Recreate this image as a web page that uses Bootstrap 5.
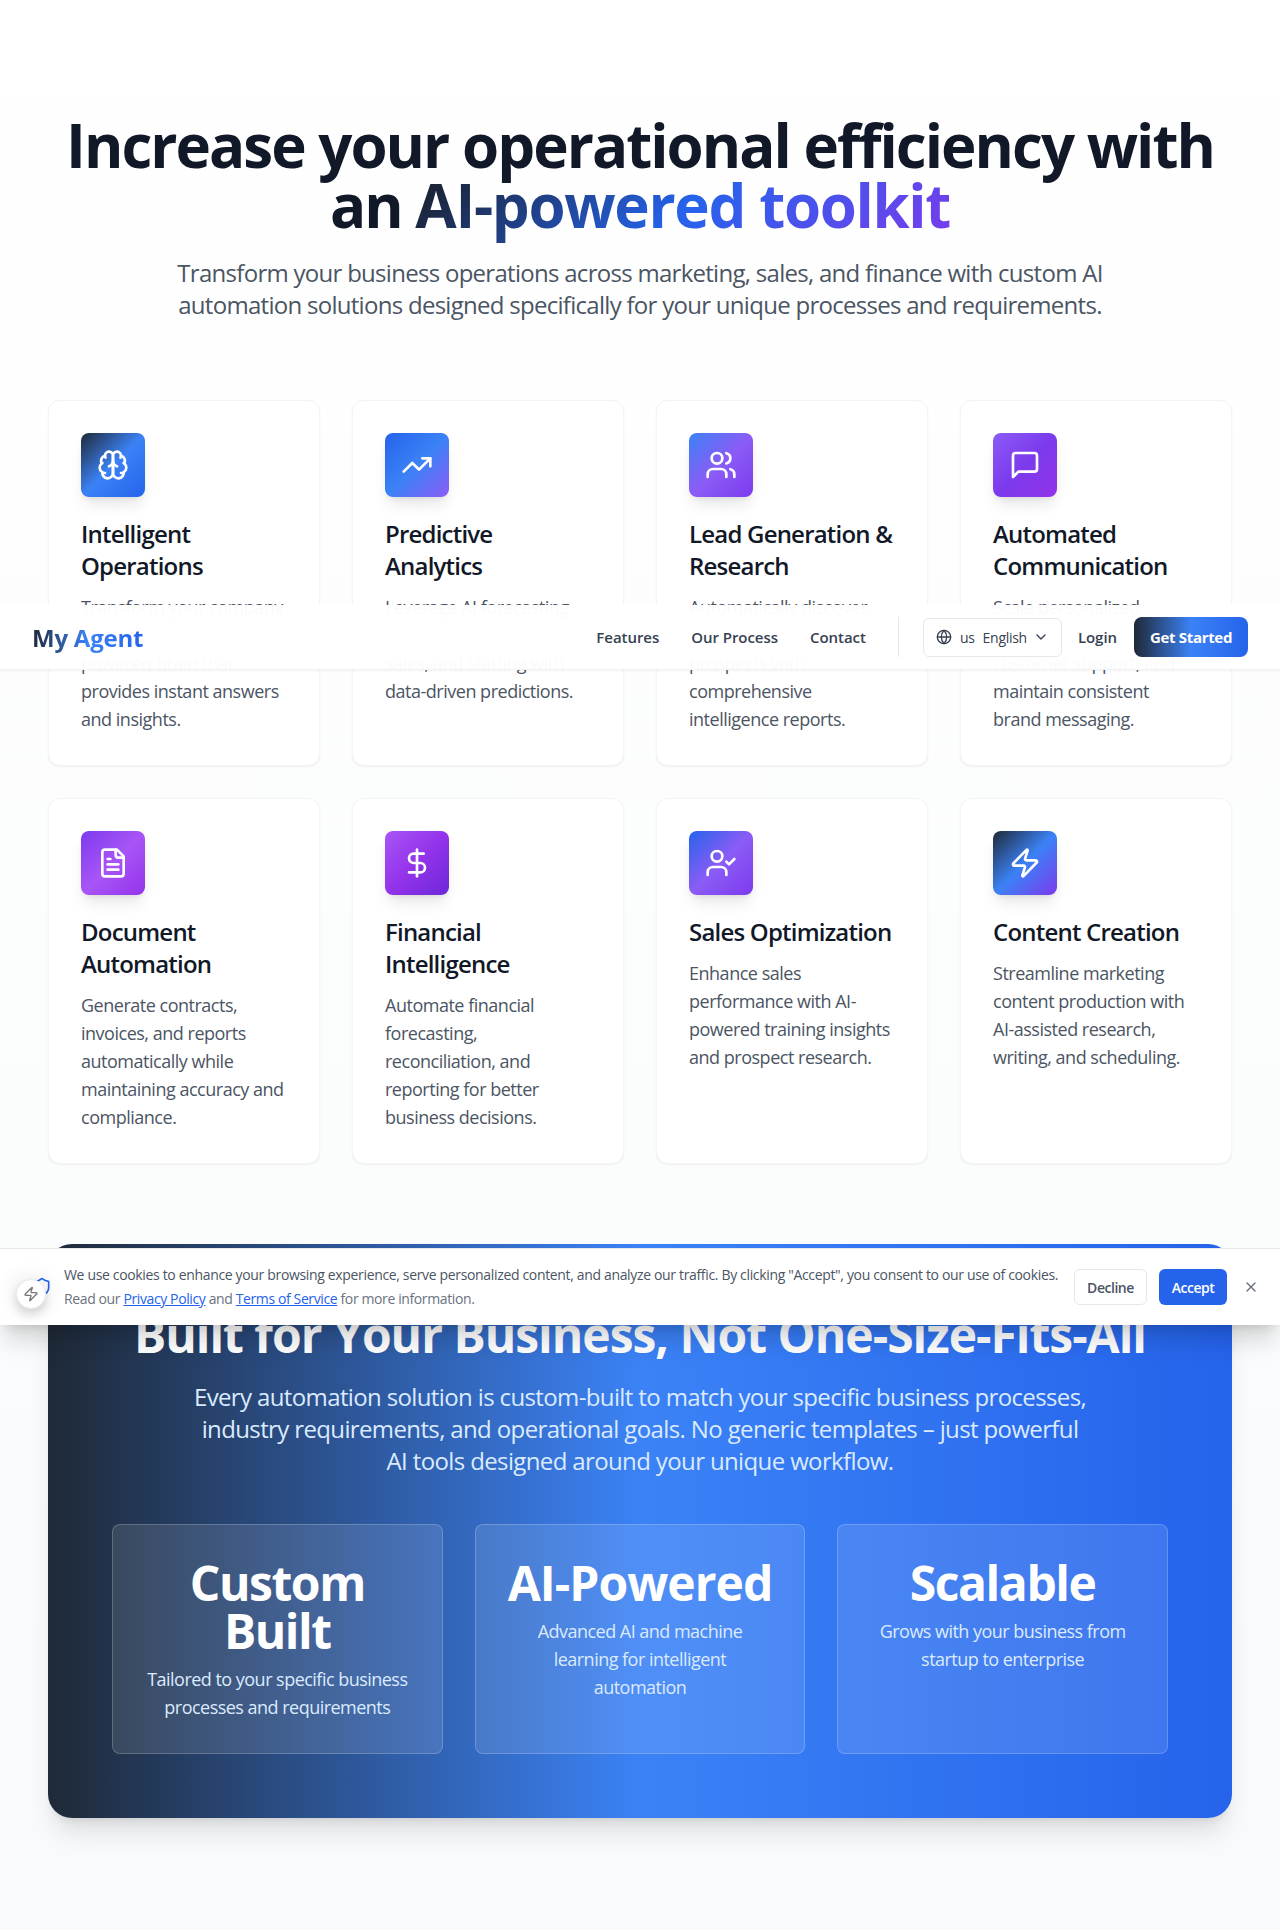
<!DOCTYPE html>
<html lang="en">
<head>
<meta charset="utf-8">
<meta name="viewport" content="width=device-width, initial-scale=1">
<title>My Agent</title>
<link href="https://cdn.jsdelivr.net/npm/bootstrap@5.3.0/dist/css/bootstrap.min.css" rel="stylesheet">
<style>
  body { font-family: "Open Sans", "Noto Sans", sans-serif; color: #111827; background: #fff; }
  svg.ico { fill: none; stroke: currentColor; stroke-width: 2; stroke-linecap: round; stroke-linejoin: round; flex: none; display: block; }

  .features { background: linear-gradient(to bottom, #fff, #fbfcfc 60%, #f9fafc 86%, #f9fafc); padding: 112px 48px; min-height: 1930px; }
  .hero-title { font-size: 60px; line-height: 60px; font-weight: 700; letter-spacing: -.0328em; padding-top: 3px; margin: 0 -20px 22px; }
  .hero-title .fade-word { letter-spacing: -.0225em; background: linear-gradient(135deg, #1a1a1a, #2563eb 50%, #7c3aed); -webkit-background-clip: text; background-clip: text; color: transparent; padding-bottom: 8px; }
  .hero-sub { font-size: 24px; line-height: 32px; letter-spacing: -.0298em; color: #4b5563; margin-bottom: 79px; }

  .feature-grid { --bs-gutter-x: 32px; --bs-gutter-y: 32px; margin-bottom: 80px; }
  .feature-card { background: #fff; border: 1px solid #f3f4f6; border-radius: 12px; box-shadow: 0 1px 2px rgba(0,0,0,.06); padding: 32px; height: 366px; }
  .tile { width: 64px; height: 64px; border-radius: 8px; color: #fff; box-shadow: 0 10px 15px -3px rgba(0,0,0,.1), 0 4px 6px -4px rgba(0,0,0,.1); margin-bottom: 20px; }
  .feature-card h3 { font-size: 24px; line-height: 32px; font-weight: 600; letter-spacing: -.033em; padding-top: 1px; margin-bottom: 11px; white-space: nowrap; }
  .feature-card p { font-size: 18px; line-height: 28px; letter-spacing: -.027em; color: #4b5563; margin: 0 -4px 0 0; }
  .g1 { background: linear-gradient(135deg, #1f2937, #3b82f6, #2563eb); }
  .g2 { background: linear-gradient(135deg, #2563eb, #3b82f6, #8b5cf6); }
  .g3 { background: linear-gradient(135deg, #3b82f6, #8b5cf6, #7c3aed); }
  .g4 { background: linear-gradient(135deg, #8b5cf6, #7c3aed, #9333ea); }
  .g5 { background: linear-gradient(135deg, #7c3aed, #a855f7, #9333ea); }
  .g6 { background: linear-gradient(135deg, #a855f7, #9333ea, #6d28d9); }
  .g7 { background: linear-gradient(135deg, #2563eb, #8b5cf6, #7c3aed); }
  .g8 { background: linear-gradient(135deg, #1f2937, #3b82f6, #7c3aed); }

  .banner { background: linear-gradient(to right, #1f2937, #3b82f6, #2563eb); border-radius: 24px; padding: 64px; height: 574px; color: #fff; box-shadow: 0 20px 25px -5px rgba(0,0,0,.1), 0 8px 10px -6px rgba(0,0,0,.1); }
  .banner h2 { font-size: 48px; line-height: 48px; font-weight: 700; letter-spacing: -.0208em; padding-top: 3px; margin-bottom: 22px; }
  .banner-sub { font-size: 24px; line-height: 32px; letter-spacing: -.0262em; color: #dbeafe; margin-bottom: 47px; }
  .perk { --bs-gutter-x: 32px; }
  .perk-box { background: rgba(255,255,255,.11); border: 1px solid rgba(255,255,255,.2); border-radius: 8px; padding: 32px 24px; height: 230px; }
  .perk-box strong { display: block; font-size: 48px; line-height: 48px; font-weight: 700; letter-spacing: -.03em; padding-top: 2px; margin-bottom: 10px; }
  .perk-box strong.wide { letter-spacing: -.02em; }
  .perk-box p { font-size: 18px; line-height: 28px; letter-spacing: -.029em; color: #dbeafe; margin: 0; }

  .topbar { top: 605px; height: 65px; z-index: 20; padding: 0 32px; border-bottom: 1px solid #f1f2f4; box-shadow: 0 1px 2px rgba(0,0,0,.05);
    background: linear-gradient(to bottom, rgba(255,255,255,.965), #fff 32%, #fff 68%, rgba(255,255,255,.965)); }
  .logo { font-size: 24px; line-height: 32px; font-weight: 700; letter-spacing: -.009em; padding-top: 2px; background: linear-gradient(to right, #1f2937, #3b82f6 50%, #2563eb); -webkit-background-clip: text; background-clip: text; color: transparent; }
  .topbar a.item { font-size: 15px; font-weight: 600; letter-spacing: -.003em; color: #374151; text-decoration: none; }
  .rule { width: 1px; height: 40px; background: #e5e7eb; margin: 0 24px 0 32px; }
  .lang { width: 139px; height: 39px; border: 1px solid #e5e7eb; border-radius: 6px; font-size: 14px; letter-spacing: -.02em; color: #374151; padding: 0 12px; background: #fff; }
  .cta { width: 114px; height: 40px; border-radius: 8px; font-size: 15px; font-weight: 700; letter-spacing: -.021em; color: #fff; background: linear-gradient(to right, #1f2937, #3b82f6, #2563eb); padding: 0; border: 0; white-space: nowrap; }

  .cookies { top: 1248px; height: 77px; z-index: 30; background: #fff; border-top: 1px solid #e5e7eb; padding: 0 21px 0 32px; box-shadow: 0 20px 25px -5px rgba(0,0,0,.15), 0 8px 10px -6px rgba(0,0,0,.12); }
  .cookies .note { font-size: 14px; line-height: 24px; letter-spacing: -.0243em; color: #4b5563; white-space: nowrap; width: 994px; }
  .cookies .note .more { letter-spacing: -.0275em; color: #6b7280; }
  .cookies .note a { color: #2563eb; }
  .cookies .btn { font-size: 14px; font-weight: 600; letter-spacing: -.033em; height: 36px; border-radius: 6px; padding: 0; }
  .decline { width: 73px; border: 1px solid #e5e7eb; color: #4b5563; background: #fff; }
  .accept { width: 68px; background: #2563eb; color: #fff; }
  .bolt { left: 16px; top: 1279px; width: 30px; height: 30px; z-index: 40; background: #fff; border: 1px solid #e9eaec; color: #777; box-shadow: 0 0 22px rgba(0,0,0,.13), 0 6px 10px rgba(0,0,0,.12); }
</style>
<script src="https://cdn.jsdelivr.net/npm/bootstrap@5.3.0/dist/js/bootstrap.bundle.min.js"></script>
</head>
<body class="position-relative">

<nav class="topbar position-absolute start-0 w-100 d-flex align-items-center justify-content-between">
  <span class="logo">My Agent</span>
  <div class="d-flex align-items-center">
    <div class="d-flex" style="gap:32px">
      <a class="item" href="#">Features</a>
      <a class="item" href="#">Our Process</a>
      <a class="item" href="#">Contact</a>
    </div>
    <span class="rule"></span>
    <div class="lang d-flex align-items-center">
      <svg class="ico me-2" width="16" height="16" viewBox="0 0 24 24"><circle cx="12" cy="12" r="10"/><path d="M12 2a14.5 14.5 0 0 0 0 20 14.5 14.5 0 0 0 0-20"/><path d="M2 12h20"/></svg>
      <span class="me-2">us</span><span>English</span>
      <svg class="ico ms-auto" width="16" height="16" viewBox="0 0 24 24"><path d="m6 9 6 6 6-6"/></svg>
    </div>
    <a class="item" style="margin:0 17px 0 16px" href="#">Login</a>
    <a class="btn cta d-flex align-items-center justify-content-center" href="#">Get Started</a>
  </div>
</nav>

<section class="features">
  <div class="text-center">
    <h1 class="hero-title">Increase your operational efficiency with<br>an <span class="fade-word">AI-powered toolkit</span></h1>
    <p class="hero-sub">Transform your business operations across marketing, sales, and finance with custom AI<br>automation solutions designed specifically for your unique processes and requirements.</p>
  </div>

  <div class="row row-cols-4 feature-grid mt-0">
    <div class="col mt-0">
      <div class="feature-card">
        <div class="tile g1 d-flex align-items-center justify-content-center"><svg class="ico" width="32" height="32" viewBox="0 0 24 24"><path d="M12 5a3 3 0 1 0-5.997.125 4 4 0 0 0-2.526 5.77 4 4 0 0 0 .556 6.588A4 4 0 1 0 12 18Z"/><path d="M12 5a3 3 0 1 1 5.997.125 4 4 0 0 1 2.526 5.77 4 4 0 0 1-.556 6.588A4 4 0 1 1 12 18Z"/><path d="M15 13a4.5 4.5 0 0 1-3-4 4.5 4.5 0 0 1-3 4"/><path d="M17.599 6.5a3 3 0 0 0 .399-1.375"/><path d="M6.003 5.125A3 3 0 0 0 6.401 6.5"/><path d="M3.477 10.896a4 4 0 0 1 .585-.396"/><path d="M19.938 10.5a4 4 0 0 1 .585.396"/><path d="M6 18a4 4 0 0 1-1.967-.516"/><path d="M19.967 17.484A4 4 0 0 1 18 18"/></svg></div>
        <h3>Intelligent<br>Operations</h3>
        <p>Transform your company<br>knowledge into an AI-<br>powered brain that<br>provides instant answers<br>and insights.</p>
      </div>
    </div>
    <div class="col mt-0">
      <div class="feature-card">
        <div class="tile g2 d-flex align-items-center justify-content-center"><svg class="ico" width="32" height="32" viewBox="0 0 24 24"><path d="M16 7h6v6"/><path d="m22 7-8.500 8.500-5-5L2 17"/></svg></div>
        <h3>Predictive<br>Analytics</h3>
        <p>Leverage AI forecasting<br>to optimize inventory,<br>sales, and staffing with<br>data-driven predictions.</p>
      </div>
    </div>
    <div class="col mt-0">
      <div class="feature-card">
        <div class="tile g3 d-flex align-items-center justify-content-center"><svg class="ico" width="32" height="32" viewBox="0 0 24 24"><path d="M16 21v-2a4 4 0 0 0-4-4H6a4 4 0 0 0-4 4v2"/><circle cx="9" cy="7" r="4"/><path d="M22 21v-2a4 4 0 0 0-3-3.870"/><path d="M16 3.130a4 4 0 0 1 0 7.750"/></svg></div>
        <h3>Lead Generation &amp;<br>Research</h3>
        <p>Automatically discover,<br>qualify, and research<br>prospects with<br>comprehensive<br>intelligence reports.</p>
      </div>
    </div>
    <div class="col mt-0">
      <div class="feature-card">
        <div class="tile g4 d-flex align-items-center justify-content-center"><svg class="ico" width="32" height="32" viewBox="0 0 24 24"><path d="M21 15a2 2 0 0 1-2 2H7l-4 4V5a2 2 0 0 1 2-2h14a2 2 0 0 1 2 2z"/></svg></div>
        <h3>Automated<br>Communication</h3>
        <p>Scale personalized<br>outreach, automate<br>customer support, and<br>maintain consistent<br>brand messaging.</p>
      </div>
    </div>
    <div class="col">
      <div class="feature-card">
        <div class="tile g5 d-flex align-items-center justify-content-center"><svg class="ico" width="32" height="32" viewBox="0 0 24 24"><path d="M15 2H6a2 2 0 0 0-2 2v16a2 2 0 0 0 2 2h12a2 2 0 0 0 2-2V7Z"/><path d="M14 2v4a2 2 0 0 0 2 2h4"/><path d="M10 9H8"/><path d="M16 13H8"/><path d="M16 17H8"/></svg></div>
        <h3>Document<br>Automation</h3>
        <p>Generate contracts,<br>invoices, and reports<br>automatically while<br>maintaining accuracy and<br>compliance.</p>
      </div>
    </div>
    <div class="col">
      <div class="feature-card">
        <div class="tile g6 d-flex align-items-center justify-content-center"><svg class="ico" width="32" height="32" viewBox="0 0 24 24"><path d="M12 2v20"/><path d="M17 5H9.500a3.500 3.500 0 0 0 0 7h5a3.500 3.500 0 0 1 0 7H6"/></svg></div>
        <h3>Financial<br>Intelligence</h3>
        <p>Automate financial<br>forecasting,<br>reconciliation, and<br>reporting for better<br>business decisions.</p>
      </div>
    </div>
    <div class="col">
      <div class="feature-card">
        <div class="tile g7 d-flex align-items-center justify-content-center"><svg class="ico" width="32" height="32" viewBox="0 0 24 24"><path d="M16 21v-2a4 4 0 0 0-4-4H6a4 4 0 0 0-4 4v2"/><circle cx="9" cy="7" r="4"/><path d="m16 11 2 2 4-4"/></svg></div>
        <h3>Sales Optimization</h3>
        <p>Enhance sales<br>performance with AI-<br>powered training insights<br>and prospect research.</p>
      </div>
    </div>
    <div class="col">
      <div class="feature-card">
        <div class="tile g8 d-flex align-items-center justify-content-center"><svg class="ico" width="32" height="32" viewBox="0 0 24 24"><path d="M4 14a1 1 0 0 1-.78-1.630l9.900-10.200a.5.5 0 0 1 .86.460l-1.920 6.020A1 1 0 0 0 13 10h7a1 1 0 0 1 .78 1.630l-9.900 10.200a.5.5 0 0 1-.86-.460l1.920-6.020A1 1 0 0 0 11 14z"/></svg></div>
        <h3>Content Creation</h3>
        <p>Streamline marketing<br>content production with<br>AI-assisted research,<br>writing, and scheduling.</p>
      </div>
    </div>
  </div>

  <div class="banner text-center">
    <h2>Built for Your Business, Not One-Size-Fits-All</h2>
    <p class="banner-sub">Every automation solution is custom-built to match your specific business processes,<br>industry requirements, and operational goals. No generic templates – just powerful<br>AI tools designed around your unique workflow.</p>
    <div class="row row-cols-3 perk">
      <div class="col"><div class="perk-box"><strong>Custom<br>Built</strong><p>Tailored to your specific business<br>processes and requirements</p></div></div>
      <div class="col"><div class="perk-box"><strong class="wide">AI-Powered</strong><p>Advanced AI and machine<br>learning for intelligent<br>automation</p></div></div>
      <div class="col"><div class="perk-box"><strong>Scalable</strong><p>Grows with your business from<br>startup to enterprise</p></div></div>
    </div>
  </div>
</section>

<aside class="cookies position-absolute start-0 w-100 d-flex align-items-center">
  <svg class="ico" width="20" height="20" viewBox="0 0 24 24" style="color:#2563eb"><path d="M20 13c0 5-3.500 7.500-7.660 8.950a1 1 0 0 1-.67-.010C7.500 20.500 4 18 4 13V6a1 1 0 0 1 1-1c2 0 4.500-1.200 6.240-2.720a1.170 1.170 0 0 1 1.520 0C14.510 3.810 17 5 19 5a1 1 0 0 1 1 1z"/></svg>
  <div class="note" style="margin-left:12px">We use cookies to enhance your browsing experience, serve personalized content, and analyze our traffic. By clicking "Accept", you consent to our use of cookies.<br><span class="more">Read our <a href="#">Privacy Policy</a> and <a href="#">Terms of Service</a> for more information.</span></div>
  <a class="btn decline ms-3 d-flex align-items-center justify-content-center" href="#">Decline</a>
  <a class="btn accept d-flex align-items-center justify-content-center" style="margin-left:12px" href="#">Accept</a>
  <svg class="ico ms-auto" width="16" height="16" viewBox="0 0 24 24" style="color:#6b7280"><path d="M18 6 6 18"/><path d="m6 6 12 12"/></svg>
</aside>

<div class="bolt position-absolute rounded-circle d-flex align-items-center justify-content-center">
  <svg class="ico" width="16" height="16" viewBox="0 0 24 24"><path d="M4 14a1 1 0 0 1-.78-1.630l9.900-10.200a.5.5 0 0 1 .86.460l-1.920 6.020A1 1 0 0 0 13 10h7a1 1 0 0 1 .78 1.630l-9.900 10.200a.5.5 0 0 1-.86-.460l1.920-6.020A1 1 0 0 0 11 14z"/></svg>
</div>
</body>
</html>
